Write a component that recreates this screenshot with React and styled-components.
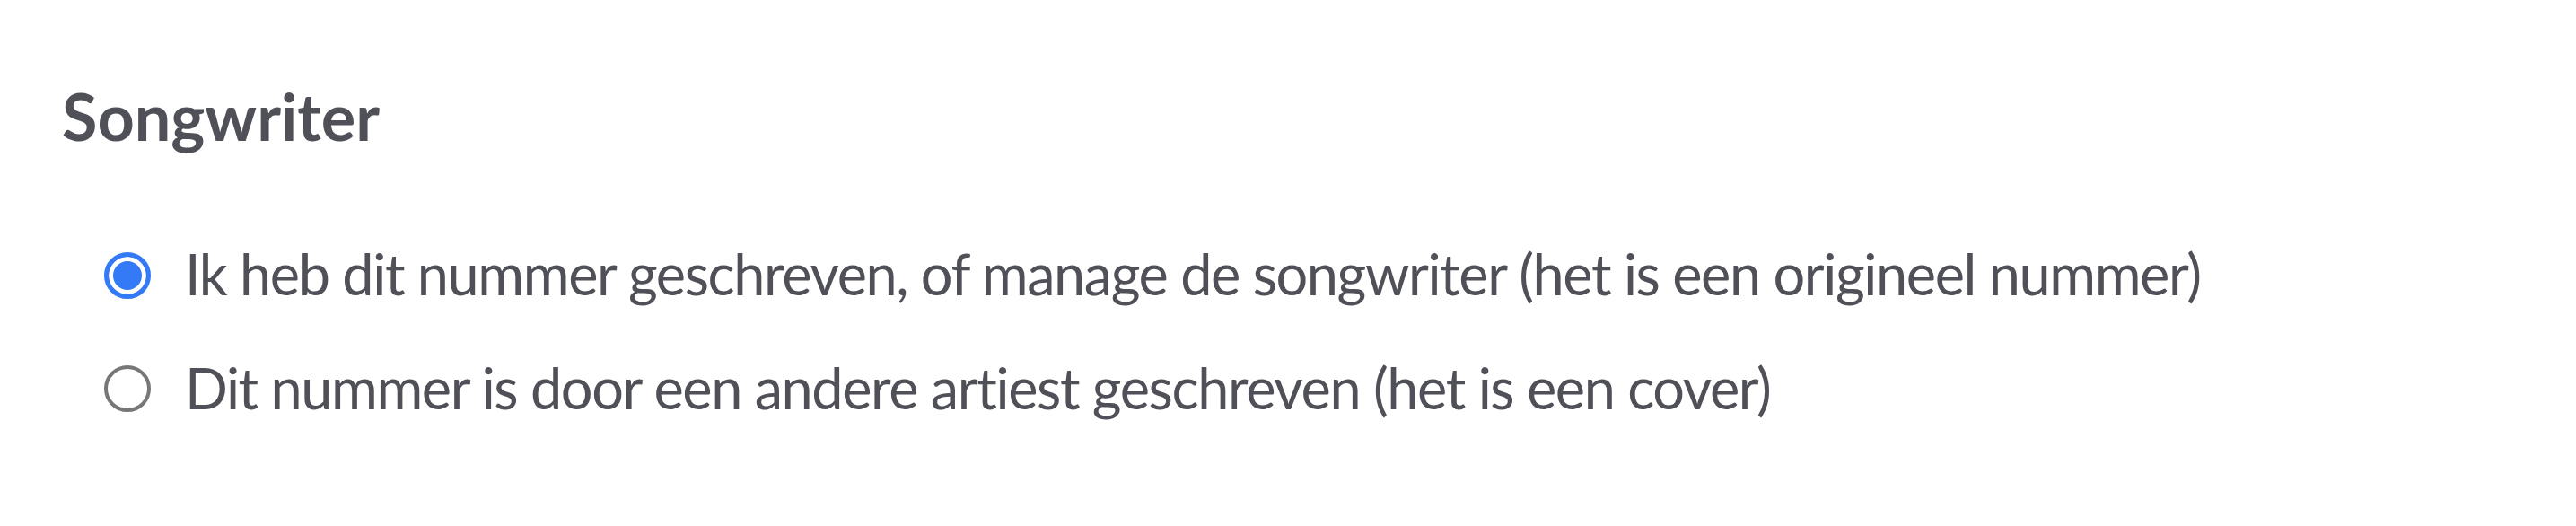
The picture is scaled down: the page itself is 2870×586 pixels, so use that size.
import React, { useState } from "react";
import styled, { createGlobalStyle } from "styled-components";

const GlobalStyle = createGlobalStyle`
  html, body {
    margin: 0;
    padding: 0;
    background: #ffffff;
  }
  body {
    font-family: Lato, "Liberation Sans", Arial, sans-serif;
    color: #505158;
  }
`;

// --- Styled Components ---

const Section = styled.section`
  display: flex;
  flex-direction: column;
  padding: 86px 0 0 69px;
`;

const Title = styled.h2`
  margin: 0;
  font-weight: 700;
  font-size: 72px;
  line-height: 1.2;
  color: #505158;
`;

const OptionList = styled.div`
  display: flex;
  flex-direction: column;
  gap: 51px;
  margin-top: 95px;
  padding-left: 47px;
`;

const Option = styled.label`
  display: flex;
  align-items: center;
  gap: 38px;
  cursor: pointer;
`;

const RadioInput = styled.input.attrs({ type: "radio" })`
  appearance: none;
  margin: 3px 0 0 0;
  box-sizing: border-box;
  width: 52px;
  height: 52px;
  flex: 0 0 52px;
  border-radius: 50%;
  border: 4px solid #777777;
  background: #ffffff;
  cursor: pointer;

  &:checked {
    border: 5px solid #3479f5;
    box-shadow: inset 0 0 0 5px #ffffff;
    background: #3479f5;
  }
`;

const OptionText = styled.span`
  font-size: 63px;
  line-height: 1.2;
  letter-spacing: -1.4px;
  color: #505158;
`;

const options = [
  { id: "original", label: "Ik heb dit nummer geschreven, of manage de songwriter (het is een origineel nummer)" },
  { id: "cover", label: "Dit nummer is door een andere artiest geschreven (het is een cover)" },
];

// --- Main Component ---

const App = () => {
  const [selected, setSelected] = useState("original");

  return (
    <>
      <GlobalStyle />
      <Section>
        <Title>Songwriter</Title>
        <OptionList>
          {options.map((opt) => (
            <Option key={opt.id}>
              <RadioInput
                name="songwriter"
                checked={selected === opt.id}
                onChange={() => setSelected(opt.id)}
              />
              <OptionText>{opt.label}</OptionText>
            </Option>
          ))}
        </OptionList>
      </Section>
    </>
  );
};

export default App;
